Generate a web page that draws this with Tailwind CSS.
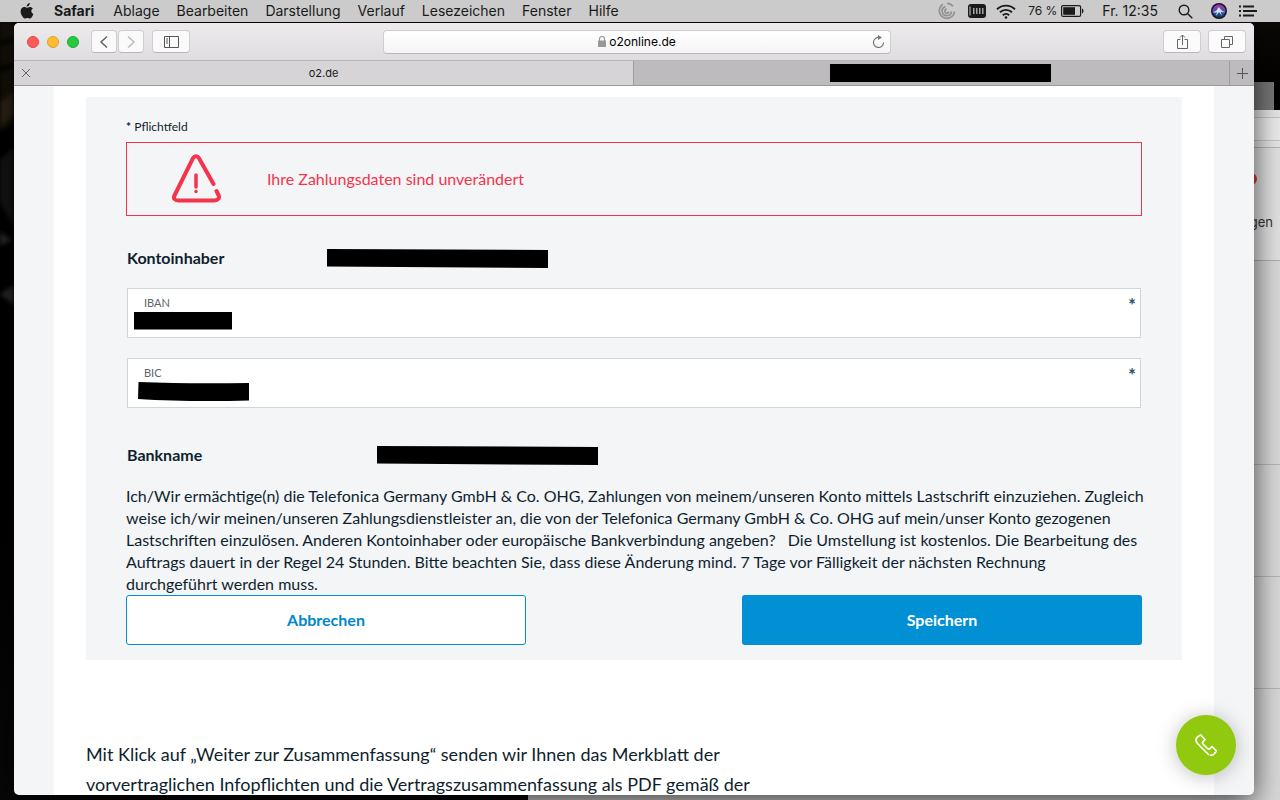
<!DOCTYPE html>
<html lang="de">

<head>
  <meta charset="UTF-8">
  <meta name="viewport" content="width=device-width, initial-scale=1.0">
  <title>o2online.de</title>
  <script src="https://cdn.jsdelivr.net/npm/@tailwindcss/browser@4"></script>
</head>

<body class="flex h-screen flex-col overflow-hidden bg-black font-['Inter','Liberation_Sans',sans-serif] text-[#1a1a1a]">

<!-- Menu bar -->
<header class="flex h-[22px] shrink-0 items-center justify-between bg-[#cbcbcb] pr-[23px] pl-[20px] text-sm leading-[22px]">
  <nav class="flex items-center gap-[17px] whitespace-nowrap">
    <svg class="mr-[3px] h-4 w-3.5" viewBox="0 0 14 16" fill="#1a1a1a"><path d="M9.8 0c.1 1-.3 1.9-.9 2.600-.6.7-1.400 1.100-2.200 1-.1-.9.300-1.800.9-2.400C8.200.5 9.100.1 9.800 0zM12.900 5.400c-1 .6-1.600 1.500-1.600 2.700 0 1.400.8 2.500 2.100 3-.3.9-.7 1.700-1.200 2.500-.7 1.100-1.400 2-2.400 2-.9 0-1.300-.6-2.400-.6-1.200 0-1.600.6-2.500.6-1 0-1.700-.9-2.400-2C1.500 12.100.6 10.400.6 8.500c0-2.900 1.800-4.500 3.700-4.500 1 0 1.900.7 2.500.7.700 0 1.700-.8 2.900-.8 1.300 0 2.500.6 3.200 1.500z"/></svg>
    <b class="mr-0.5">Safari</b>
    <a href="#">Ablage</a>
    <a href="#">Bearbeiten</a>
    <a href="#">Darstellung</a>
    <a href="#">Verlauf</a>
    <a href="#">Lesezeichen</a>
    <a href="#">Fenster</a>
    <a href="#">Hilfe</a>
  </nav>
  <div class="flex items-center whitespace-nowrap">
    <svg class="mr-3 h-[18px] w-[18px]" viewBox="0 0 18 18" fill="none" stroke="#929292" stroke-width="1.700"><path d="M5 2.200A7.600 7.600 0 1 0 16.500 9.500M7.500 4.500a4.700 4.700 0 1 0 6 5M8.800 7.200a2 2 0 1 0 2 2.300M9 1.300a7.600 7.600 0 0 1 6 3"/></svg>
    <svg class="mr-2.5 h-3.5 w-[18px]" viewBox="0 0 18 14"><rect width="18" height="14" rx="3" fill="#1a1a1a"/><path d="M2 2.500v9" stroke="#ccc"/><path d="M5.800 4v6M8.800 4v6M11.800 4v6M14.800 4v6" stroke="#bbb" stroke-width="1.300"/></svg>
    <svg class="mr-3 h-[15px] w-5" viewBox="0 0 20 15" fill="none" stroke="#1a1a1a" stroke-width="1.900"><path d="M1 5.200a13 13 0 0 1 18 0M4 8.300a8.600 8.600 0 0 1 12 0M6.800 11.200a4.600 4.600 0 0 1 6.400 0"/><circle cx="10" cy="13.500" r="1.300" fill="#1a1a1a" stroke="none"/></svg>
    <span class="mr-1 text-xs leading-[22px]">76 %</span>
    <svg class="mr-[18px] h-3 w-[23px]" viewBox="0 0 23 12"><rect x=".6" y=".6" width="19" height="10.800" rx="1.500" fill="none" stroke="#1a1a1a" stroke-width="1.200"/><path d="M2.200 2.200H14v7.600H2.200z" fill="#1a1a1a"/><path d="M21 3.500c2 .8 2 4.200 0 5z" fill="#1a1a1a"/></svg>
    <span class="mr-5">Fr. 12:35</span>
    <svg class="mr-[18px] h-[15px] w-[15px]" viewBox="0 0 15 15" fill="none" stroke="#1a1a1a" stroke-width="1.400"><circle cx="6" cy="6" r="4.800"/><path d="m9.500 9.500 4.800 4.800"/></svg>
    <svg class="mr-3 h-4 w-4" viewBox="0 0 16 16">
      <defs><linearGradient id="siri" x1="0" y1="0" x2="0" y2="1"><stop offset="0" stop-color="#c02a9a"/><stop offset=".5" stop-color="#4c52b8"/><stop offset="1" stop-color="#0d3b57"/></linearGradient></defs>
      <circle cx="8" cy="8" r="8" fill="#15152b"/><circle cx="8" cy="8" r="6.500" fill="url(#siri)"/>
      <path d="M2 9c3-.5 4-1.500 5-4 .8-.8 1.600-.4 2 .6 1 2 2.500 3 5 3.400-2 .7-3.500.3-4.500-.5L11 13 8 9l-3 4 1-4c-1.500.7-2.500.7-4 0z" fill="#c9ecfa"/>
    </svg>
    <svg class="h-3 w-[18px]" viewBox="0 0 18 12" stroke="#1a1a1a" stroke-width="2"><path d="M0 1.500h2M4 1.500h11M0 6h2M4 6h14M0 10.500h2M4 10.500h11"/></svg>
  </div>
</header>

<!-- Desktop -->
<main class="relative min-h-0 flex-1 overflow-hidden bg-black bg-linear-to-b from-[#0c0a07] via-black via-20% to-[#080808]">
  <!-- Wallpaper on the left edge -->
  <svg class="absolute top-0 left-0 h-[600px] w-3.5 blur-[2px]" viewBox="0 0 14 600" fill="none">
    <path d="M0 0h14v100L0 110z" fill="#15110a"/>
    <path d="M0 22 14 17M0 48 14 43" stroke="#050403" stroke-width="5"/>
    <path d="M0 80 14 70v22L0 105z" fill="#2e2416"/>
    <path d="M0 138 14 125v80L0 180z" fill="#151515"/>
    <path d="m0 210 12 8-12 6zM0 272l14-9v20z" fill="#2a2a2a"/>
  </svg>

  <!-- Window behind -->
  <div class="absolute top-[60px] right-[6px] h-7 w-5 bg-[#777]"></div>
  <div class="absolute top-[88px] right-0 -bottom-5 left-[528px] rounded-lg bg-[#d9d9d9] text-right text-[13px] text-[#333]">
    <div class="flex h-[38px] flex-col justify-center border-b border-[#b5b5b5] bg-[#e6e6e6]">
      <div class="h-6 border-y border-[#c6c6c6] bg-[#ececec]"></div>
    </div>
    <div class="relative h-[113px] border-b border-[#b0b0b0] bg-[#e2e2e2] pt-[64px] pr-[7px] leading-5">
      <span class="absolute top-[25px] right-[23px] size-3 rounded-full bg-[#d63f34]"></span>
      Bestellungen
    </div>
    <div class="h-[428px] border-b border-[#b5b5b5]">
      <div class="h-[204px] border-b border-[#b5b5b5]"></div>
      <div class="h-[112px] border-b border-[#b5b5b5]"></div>
    </div>
  </div>

  <!-- Browser window -->
  <section class="absolute top-px right-[26px] bottom-[5px] left-[14px] flex flex-col overflow-hidden rounded-[5px] bg-[#f3f5f7] shadow-[0_8px_30px_rgba(0,0,0,0.7)]">
    <div class="flex h-[38px] shrink-0 items-center justify-between border-b border-[#b8b6b9] bg-linear-to-b from-[#edebee] to-[#dfdde0] pr-2 pl-[13px]">
      <div class="flex w-[200px] items-center">
        <div class="mr-3 flex gap-2">
          <button type="button" aria-label="Schließen" class="size-3 rounded-full border border-[#e2463f] bg-[#fc5b57]"></button>
          <button type="button" aria-label="Minimieren" class="size-3 rounded-full border border-[#e0a029] bg-[#fdbc2f]"></button>
          <button type="button" aria-label="Maximieren" class="size-3 rounded-full border border-[#1dac2c] bg-[#27c93f]"></button>
        </div>
        <div class="mr-2 flex gap-px">
          <button type="button" aria-label="Zurück" class="flex h-[23px] w-[26px] items-center justify-center rounded-[4px] border border-[#cfcdd0] border-b-[#b9b7ba] bg-[#fafafa]">
            <svg class="h-3.5 w-2.5" viewBox="0 0 10 14" fill="none" stroke="#666" stroke-width="1.500"><path d="M8 1.500 2 7l6 5.500"/></svg>
          </button>
          <button type="button" aria-label="Vor" class="flex h-[23px] w-[26px] items-center justify-center rounded-[4px] border border-[#cfcdd0] border-b-[#b9b7ba] bg-[#fafafa]">
            <svg class="h-3.5 w-2.5" viewBox="0 0 10 14" fill="none" stroke="#bbb" stroke-width="1.500"><path d="m2 1.500 6 5.500-6 5.500"/></svg>
          </button>
        </div>
        <button type="button" aria-label="Seitenleiste" class="flex h-[23px] w-[38px] items-center justify-center rounded-[4px] border border-[#cfcdd0] border-b-[#b9b7ba] bg-[#fafafa]">
          <svg class="h-3 w-[15px]" viewBox="0 0 15 12" fill="none" stroke="#555"><path d="M.5.500h14v11H.500zM5.500.500v11M2 3h2M2 5h2M2 7h2"/></svg>
        </button>
      </div>
      <div class="relative w-[508px]">
        <input type="text" aria-label="Adresse" value="o2online.de" class="block h-6 w-full rounded-[4px] border border-[#cfcdd0] border-b-[#b9b7ba] bg-linear-to-b from-white to-[#f4f4f4] pl-3 text-center text-xs text-black">
        <svg class="absolute top-[6px] left-[215px] h-[11px] w-2" viewBox="0 0 8 11"><path d="M1.500 5V3a2.500 2.500 0 0 1 5 0v2" fill="none" stroke="#999" stroke-width="1.200"/><path d="M0 4.500h8V11H0z" fill="#999"/></svg>
        <button type="button" aria-label="Neu laden" class="absolute top-[5px] right-[6px]">
          <svg class="size-[13px]" viewBox="0 0 13 13" fill="none" stroke="#777" stroke-width="1.200"><path d="M7 2.500a5 5 0 1 0 4.500 5"/><path d="M6 0v5l4-2.500z" fill="#777" stroke="none"/></svg>
        </button>
      </div>
      <div class="flex w-[200px] justify-end gap-[7px]">
        <button type="button" aria-label="Teilen" class="flex h-[23px] w-[38px] items-center justify-center rounded-[4px] border border-[#cfcdd0] border-b-[#b9b7ba] bg-[#fbfbfb]">
          <svg class="h-[15px] w-[11px]" viewBox="0 0 11 15" fill="none" stroke="#666"><path d="M3.500 5.500h-3v9h10v-9h-3M5.500 11V1M3 3.500 5.500 1 8 3.500"/></svg>
        </button>
        <button type="button" aria-label="Tabs anzeigen" class="flex h-[23px] w-[38px] items-center justify-center rounded-[4px] border border-[#cfcdd0] border-b-[#b9b7ba] bg-[#fbfbfb]">
          <svg class="size-3" viewBox="0 0 12 12" fill="none" stroke="#666"><path d="M.5 3.500h8v8h-8zM3.500 3.500v-3h8v8h-3"/></svg>
        </button>
      </div>
    </div>

    <!-- Tabs -->
    <div class="flex h-[25px] shrink-0 border-b border-[#9b999c] bg-[#bdbbbd] text-[11px]">
      <div class="relative flex w-1/2 items-center justify-center border-r border-[#a09ea0] bg-[#d6d4d7]">
        <button type="button" aria-label="Tab schließen" class="absolute left-2">
          <svg class="size-2" viewBox="0 0 8 8" stroke="#666"><path d="m0 0 8 8M8 0 0 8"/></svg>
        </button>
        o2.de
      </div>
      <div class="flex flex-1 items-center justify-center pl-[17px]">
        <span class="h-[18px] w-[221px] bg-black"></span>
      </div>
      <button type="button" aria-label="Neuer Tab" class="flex w-[25px] items-center justify-center border-l border-[#a09ea0]">
        <svg class="size-[11px]" viewBox="0 0 11 11" stroke="#555"><path d="M5.500 0v11M0 5.500h11"/></svg>
      </button>
    </div>

    <!-- Page -->
    <div class="min-h-0 flex-1 overflow-hidden px-10 font-['Lato','Open_Sans',sans-serif] text-[#0f1f2e]">
      <div class="h-full bg-white px-8 pt-[11px]">
        <form class="bg-[#f3f5f7] px-10 pt-5 pb-[15px]">
          <p class="mb-[5px] text-xs leading-5"><b>*</b> Pflichtfeld</p>
          <div role="alert" class="flex h-[74px] items-center border border-[#f5334b] pl-[45px] text-base text-[#f5334b]">
            <svg class="mr-[45px] size-[50px]" viewBox="0 0 50 50" fill="none" stroke="#f5334b" stroke-width="4" stroke-linecap="round"><path d="M41.500 30 27 4.200C25.500 1.700 22.500 1.700 21 4.200L2.500 41.500c-1.500 3 .5 5 3.500 5h36.500c3.500 0 5.500-2.500 4-5.500l-2-4"/><path d="M24 21v12" stroke-width="3.500"/><path d="M24 37.500v.1" stroke-width="3.500"/></svg>
            Ihre Zahlungsdaten sind unverändert
          </div>

          <div class="mt-8 flex h-5 items-center px-px font-bold">
            <span class="w-[200px]">Kontoinhaber</span>
            <svg class="h-[19px] w-[221px]" viewBox="0 0 221 19"><path d="M0 0 221 1v18L0 17.500z"/></svg>
          </div>

          <div class="mt-5 flex flex-col gap-5 px-px">
            <div class="relative">
              <label for="iban" class="absolute top-[7px] left-[17px] text-[11px] leading-4 text-[#5c6570]">IBAN</label>
              <input id="iban" type="text" required class="block h-[50px] w-full border border-[#d0d5d9] bg-white px-4 pt-4">
              <svg class="absolute top-6 left-[7px] h-[18px] w-[98px]" viewBox="0 0 98 18"><path d="M0 0h98v17.500H0z"/></svg>
              <span class="absolute top-[7px] right-[5px] text-lg leading-5 font-bold text-[#2b5068]">*</span>
            </div>
            <div class="relative">
              <label for="bic" class="absolute top-[7px] left-[17px] text-[11px] leading-4 text-[#5c6570]">BIC</label>
              <input id="bic" type="text" required class="block h-[50px] w-full border border-[#d0d5d9] bg-white px-4 pt-4">
              <svg class="absolute top-6 left-[11px] h-[19px] w-[111px]" viewBox="0 0 111 19"><path d="M.5 0Q50 2 111 1v17.500Q50 20 0 17z"/></svg>
              <span class="absolute top-[7px] right-[5px] text-lg leading-5 font-bold text-[#2b5068]">*</span>
            </div>
          </div>

          <div class="mt-[37px] flex h-5 items-center px-px font-bold">
            <span class="w-[250px]">Bankname</span>
            <svg class="h-[19px] w-[221px]" viewBox="0 0 221 19"><path d="M0 0 221 1v18L0 17.500z"/></svg>
          </div>

          <p class="mt-5 text-base leading-[22px] whitespace-nowrap">
            Ich/Wir ermächtige(n) die Telefonica Germany GmbH &amp; Co. OHG, Zahlungen von meinem/unseren Konto mittels Lastschrift einzuziehen. Zugleich<br>
            weise ich/wir meinen/unseren Zahlungsdienstleister an, die von der Telefonica Germany GmbH &amp; Co. OHG auf mein/unser Konto gezogenen<br>
            Lastschriften einzulösen. Anderen Kontoinhaber oder europäische Bankverbindung angeben? &nbsp; Die Umstellung ist kostenlos. Die Bearbeitung des<br>
            Auftrags dauert in der Regel 24 Stunden. Bitte beachten Sie, dass diese Änderung mind. 7 Tage vor Fälligkeit der nächsten Rechnung<br>
            durchgeführt werden muss.
          </p>

          <div class="flex justify-between font-bold">
            <button type="button" class="h-[50px] w-[400px] rounded-[3px] border border-[#0090d3] bg-white text-[#0087cc]">Abbrechen</button>
            <button type="submit" class="h-[50px] w-[400px] rounded-[3px] bg-[#0090d3] text-white">Speichern</button>
          </div>
        </form>

        <p class="mt-[79px] text-lg leading-[30px] whitespace-nowrap">
          Mit Klick auf „Weiter zur Zusammenfassung“ senden wir Ihnen das Merkblatt der<br>
          vorvertraglichen Infopflichten und die Vertragszusammenfassung als PDF gemäß der
        </p>
      </div>
    </div>

    <!-- Call button -->
    <button type="button" aria-label="Anrufen" class="absolute right-[18px] bottom-5 flex size-[60px] items-center justify-center rounded-full bg-[#91c90e] shadow-[0_2px_20px_rgba(0,0,0,0.25)]">
      <svg class="size-[22px]" viewBox="0 0 22 22" fill="none" stroke="#fff" stroke-width="1.700" stroke-linecap="round" stroke-linejoin="round"><path d="M13.500 20.500 2.500 9.500C.5 7 .8 4.500 2.500 3L5.500.900l4.500 4.600L7.500 8.500v1l5.500 5.500h1.500l2.500-2.500 4.500 4.500-2.500 3c-1 1-2 1.400-3.500 1.300"/></svg>
    </button>
  </section>
</main>

</body>

</html>
